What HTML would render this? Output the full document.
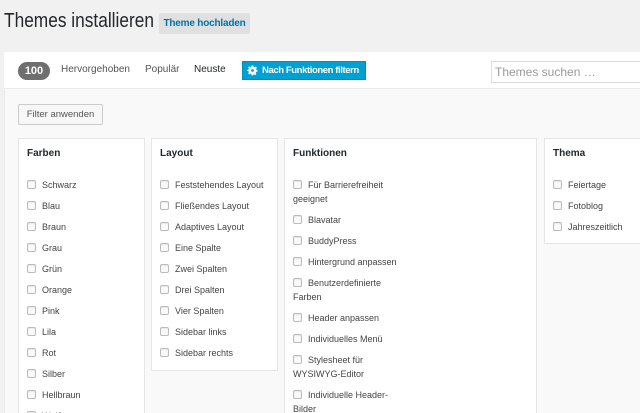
<!DOCTYPE html>
<html><head><meta charset="utf-8"><style>
*{box-sizing:border-box;margin:0;padding:0}
html,body{width:640px;height:413px;overflow:hidden}
body{background:#f1f1f1;font-family:"Liberation Sans",sans-serif;color:#444;position:relative}
.abs{position:absolute;white-space:nowrap}
h1{position:absolute;left:4px;top:10px;font-size:20px;font-weight:normal;color:#23282d;white-space:nowrap;transform:scaleX(0.865);transform-origin:left top}
.up{left:159px;top:13px;width:91px;height:21px;background:#e0e0e0;color:#0073aa;font-size:10px;font-weight:bold;line-height:21px;text-align:center;border-radius:2px;letter-spacing:-0.2px}
.bar{left:4px;top:52px;width:636px;height:37px;background:#fff;border-bottom:1px solid #eaeaea}
.low{left:4px;top:89px;width:636px;height:324px;background:#f9f9f9;border-left:1px solid #ececec}
.cnt{left:18px;top:62px;width:32px;height:18px;border-radius:9px;background:#6f6f6f;color:#fff;font-size:11px;font-weight:bold;text-align:center;line-height:18px}
.nav{top:64px;font-size:10px;color:#555}
.blue{left:242px;top:61px;width:124px;height:19px;background:#00a0d2;color:#fff;font-size:9.5px;font-weight:bold;line-height:17px;padding-left:19px;border:1px solid #0090c0;letter-spacing:-0.4px;overflow:hidden}
.srch{left:491px;top:61px;width:160px;height:22px;background:#fff;border:1px solid #ddd;font-size:12px;color:#999;padding-left:3px;line-height:20px}
.fa{left:18px;top:104px;width:85px;height:21px;border:1px solid #ccc;background:#f7f7f7;font-size:9.5px;color:#555;line-height:19px;text-align:center;border-radius:2px}
.box{background:#fff;border:1px solid #e5e5e5;padding:8px 8px;overflow:hidden}
.box h4{font-size:10px;font-weight:bold;color:#23282d;margin-bottom:17px;line-height:14px}
.it{font-size:9px;line-height:14px;margin-bottom:7px;color:#444;white-space:nowrap}
.w{white-space:normal;width:105px}
.cb{display:inline-block;width:9px;height:9px;border:1px solid #bbb;border-radius:2px;background:#fafafa;vertical-align:-1px;margin-right:6px;box-shadow:inset 0 1px 1px rgba(0,0,0,.08)}
</style></head><body>
<h1>Themes installieren</h1>
<div class="abs up">Theme hochladen</div>
<div class="abs bar"></div>
<div class="abs low"></div>
<div class="abs cnt">100</div>
<div class="abs nav" style="left:61px">Hervorgehoben</div>
<div class="abs nav" style="left:145px">Populär</div>
<div class="abs nav" style="left:194px;color:#23282d">Neuste</div>
<div class="abs blue"><svg class="abs" style="left:4px;top:3px" width="11" height="11" viewBox="0 0 20 20"><path fill="#fff" d="M8.5 1h3l.5 2.5 1.8.8 2.1-1.5 2.1 2.1-1.5 2.1.8 1.8L19 9v3l-2.5.5-.8 1.8 1.5 2.1-2.1 2.1-2.1-1.5-1.8.8L11 19H8.5L8 16.5l-1.8-.8-2.1 1.5L2 15.1l1.5-2.1-.8-1.8L.2 11V9l2.5-.5.8-1.8L2 4.6 4.1 2.5l2.1 1.5 1.8-.8z"/><circle cx="10" cy="10" r="2.5" fill="#00a0d2"/></svg>Nach Funktionen filtern</div>
<div class="abs srch">Themes suchen …</div>
<div class="abs fa">Filter anwenden</div>

<div class="abs box" style="left:18px;top:138px;width:127px;height:280px">
<h4>Farben</h4>
<div class="it"><span class="cb"></span>Schwarz</div>
<div class="it"><span class="cb"></span>Blau</div>
<div class="it"><span class="cb"></span>Braun</div>
<div class="it"><span class="cb"></span>Grau</div>
<div class="it"><span class="cb"></span>Grün</div>
<div class="it"><span class="cb"></span>Orange</div>
<div class="it"><span class="cb"></span>Pink</div>
<div class="it"><span class="cb"></span>Lila</div>
<div class="it"><span class="cb"></span>Rot</div>
<div class="it"><span class="cb"></span>Silber</div>
<div class="it"><span class="cb"></span>Hellbraun</div>
<div class="it"><span class="cb"></span>Weiß</div>
</div>

<div class="abs box" style="left:151px;top:138px;width:127px;height:233px">
<h4>Layout</h4>
<div class="it"><span class="cb"></span>Feststehendes Layout</div>
<div class="it"><span class="cb"></span>Fließendes Layout</div>
<div class="it"><span class="cb"></span>Adaptives Layout</div>
<div class="it"><span class="cb"></span>Eine Spalte</div>
<div class="it"><span class="cb"></span>Zwei Spalten</div>
<div class="it"><span class="cb"></span>Drei Spalten</div>
<div class="it"><span class="cb"></span>Vier Spalten</div>
<div class="it"><span class="cb"></span>Sidebar links</div>
<div class="it"><span class="cb"></span>Sidebar rechts</div>
</div>

<div class="abs box" style="left:284px;top:138px;width:253px;height:280px">
<h4>Funktionen</h4>
<div class="it w"><span class="cb"></span>Für Barrierefreiheit geeignet</div>
<div class="it"><span class="cb"></span>Blavatar</div>
<div class="it"><span class="cb"></span>BuddyPress</div>
<div class="it"><span class="cb"></span>Hintergrund anpassen</div>
<div class="it w"><span class="cb"></span>Benutzerdefinierte Farben</div>
<div class="it"><span class="cb"></span>Header anpassen</div>
<div class="it"><span class="cb"></span>Individuelles Menü</div>
<div class="it w"><span class="cb"></span>Stylesheet für WYSIWYG-Editor</div>
<div class="it w"><span class="cb"></span>Individuelle Header-Bilder</div>
</div>

<div class="abs box" style="left:544px;top:138px;width:96px;height:106px;border-right:none">
<h4>Thema</h4>
<div class="it"><span class="cb"></span>Feiertage</div>
<div class="it"><span class="cb"></span>Fotoblog</div>
<div class="it"><span class="cb"></span>Jahreszeitlich</div>
</div>
</body></html>
